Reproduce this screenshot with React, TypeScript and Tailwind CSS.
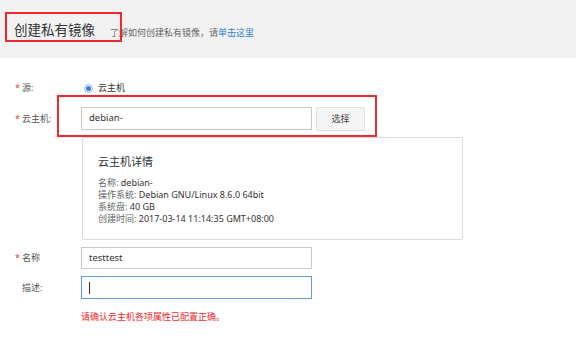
import { useState } from "react";

const font = { fontFamily: "'Noto Sans', 'Noto Sans CJK SC', sans-serif" };

function Label({ text, required }: { text: string; required?: boolean }) {
	return (
		<div className="flex w-[66px] shrink-0 items-center text-[9px] text-[#555]">
			<span className="w-[7px] text-[#e2383d]">{required ? "*" : ""}</span>
			<span>{text}</span>
		</div>
	);
}

function Field({ value, focused }: { value?: string; focused?: boolean }) {
	return (
		<div
			className={`flex h-full w-[231px] items-center border px-[7px] text-[9.5px] text-[#333] ${
				focused ? "border-[#5a9bd8]" : "border-[#c9c9c9]"
			}`}
		>
			{value}
			{focused && <span className="h-[12px] w-px bg-[#333]" />}
		</div>
	);
}

const details = [
	["名称:", "debian-"],
	["操作系统:", "Debian GNU/Linux 8.6.0 64bit"],
	["系统盘:", "40 GB"],
	["创建时间:", "2017-03-14 11:14:35 GMT+08:00"],
];

export default function App() {
	const [source] = useState("vm");

	return (
		<div className="relative h-[352px] w-[576px] overflow-hidden bg-white" style={font}>
			{/* header */}
			<div className="flex h-[58px] items-center bg-[#f2f2f2] pl-[14px] pt-[3px]">
				<h1 className="w-[96px] text-[13.5px] leading-none text-[#333]">创建私有镜像</h1>
				<p className="mt-[4px] text-[9px] text-[#666]">
					了解如何创建私有镜像，请<span className="text-[#2e7fd6]">单击这里</span>
				</p>
			</div>

			{/* form */}
			<div className="flex flex-col pl-[15px]">
				<div className="mt-[22px] flex h-[16px] items-center">
					<Label text="源:" required />
					<label className="flex items-center gap-[5px] pl-[3px] text-[9px] text-[#333]">
						<span className="flex h-[9px] w-[9px] items-center justify-center rounded-full border border-[#9bb7d6] bg-white">
							{source === "vm" && <span className="h-[5px] w-[5px] rounded-full bg-[#2e7fd6]" />}
						</span>
						云主机
					</label>
				</div>

				<div className="mt-[11px] flex h-[23px] items-center">
					<Label text="云主机:" required />
					<Field value="debian-" />
					<button className="ml-[4px] h-[24px] w-[49px] rounded-[2px] border border-[#e0e0e0] bg-[#f5f5f5] text-[9px] text-[#444]">
						选择
					</button>
				</div>

				<div className="ml-[67px] mt-[7px] h-[103px] w-[381px] rounded-[2px] border border-[#dcdcdc] pl-[15px] pt-[17px]">
					<div className="text-[11px] leading-[14px] text-[#333]">云主机详情</div>
					<div className="mt-[8px] flex flex-col text-[9px] leading-[12px] text-[#333]">
						{details.map(([k, v]) => (
							<div key={k}>
								<span className="text-[#666]">{k}</span> {v}
							</div>
						))}
					</div>
				</div>

				<div className="mt-[7px] flex h-[22px] items-center">
					<Label text="名称" required />
					<Field value="testtest" />
				</div>

				<div className="mt-[7px] flex h-[23px] items-center">
					<Label text="描述:" />
					<Field focused />
				</div>

				<div className="ml-[66px] mt-[12px] text-[9px] leading-[12px] text-[#f2252b]">
					请确认云主机各项属性已配置正确。
				</div>
			</div>

			{/* annotation boxes */}
			<div className="absolute left-[5px] top-[12px] h-[30px] w-[117px] border-2 border-[#ee2a2e]" />
			<div className="absolute left-[57px] top-[95px] h-[42px] w-[320px] border-2 border-[#ee2a2e]" />
		</div>
	);
}
